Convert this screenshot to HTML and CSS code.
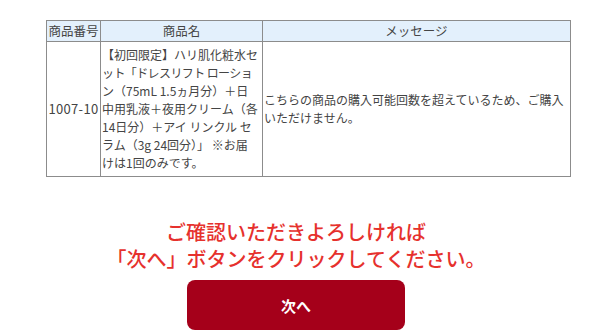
FILE: index.html
```html
<!DOCTYPE html>
<html lang="ja">
<head>
  <meta charset="UTF-8" />
  <title>ご購入確認</title>
  <link rel="stylesheet" href="styles.css">
</head>
<body>
  <main class="page">
    <table class="order-table">
      <thead>
        <tr>
          <th class="col-no">商品番号</th>
          <th class="col-name">商品名</th>
          <th class="col-msg">メッセージ</th>
        </tr>
      </thead>
      <tbody>
        <tr>
          <td class="col-no">1007-10</td>
          <td class="col-name">
            <span class="line">【初回限定】ハリ肌化粧水セ</span>
            <span class="line tight">ット「ドレスリフト ローショ</span>
            <span class="line">ン（75mL 1.5ヵ月分）＋日</span>
            <span class="line">中用乳液＋夜用クリーム（各</span>
            <span class="line">14日分）＋アイ リンクル セ</span>
            <span class="line">ラム（3g 24回分）」 ※お届</span>
            <span class="line">けは1回のみです。</span>
          </td>
          <td class="col-msg">こちらの商品の購入可能回数を超えているため、ご購入いただけません。</td>
        </tr>
      </tbody>
    </table>

    <p class="notice">ご確認いただきよろしければ<br>「次へ」ボタンをクリックしてください。</p>

    <div class="actions">
      <button type="button" class="next-btn">次へ</button>
    </div>
  </main>
</body>
</html>
```

FILE: styles.css
```css
* { box-sizing: border-box; }
body {
  margin: 0;
  background: #fff;
  font-family: 'Noto Sans CJK JP', 'Noto Sans', sans-serif;
  color: #444;
}
.page {
  padding-top: 20px;
}
.order-table {
  margin-left: 46px;
  width: 525px;
  border-collapse: collapse;
  table-layout: fixed;
  font-size: 12px;
  line-height: 18px;
}
.order-table th,
.order-table td {
  border: 1px solid #8c8c8c;
  padding: 0;
  font-weight: normal;
}
.order-table th {
  background: #e3f0fc;
  height: 21px;
  text-align: center;
  font-size: 12.5px;
}
.order-table td {
  height: 135px;
  vertical-align: middle;
}
.col-no { width: 54px; }
.col-name { width: 162px; }
td.col-no {
  font-size: 13px;
  text-align: center;
  letter-spacing: 0.3px;
}
td.col-name {
  padding: 0 1px;
  overflow: hidden;
}
td.col-name .line {
  display: block;
  white-space: nowrap;
}
td.col-name .line.tight {
  letter-spacing: -0.6px;
}
td.col-msg {
  padding: 0 3px 0 1px;
}
.notice {
  margin: 41px 0 0;
  text-align: center;
  color: #e6312d;
  font-size: 20px;
  line-height: 27px;
  font-weight: 500;
  padding-right: 8px;
}
.actions {
  display: flex;
  justify-content: center;
  margin-top: 8px;
  padding-right: 8px;
}
.next-btn {
  width: 218px;
  height: 50px;
  border: none;
  border-radius: 8px;
  background: #a5001a;
  color: #fff;
  font-family: inherit;
  font-size: 15px;
  font-weight: bold;
  cursor: pointer;
}
```
